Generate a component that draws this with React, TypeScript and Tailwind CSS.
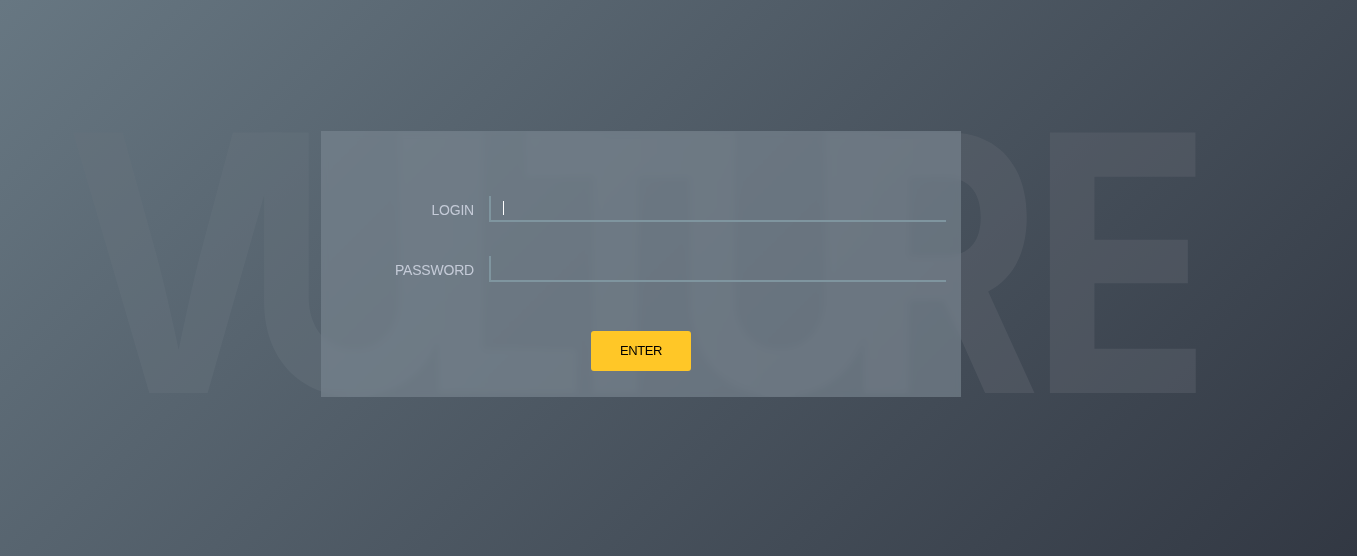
export default function App() {
  return (
    <div className="relative h-[556px] w-full overflow-hidden bg-[linear-gradient(135deg,#677782_0%,#323843_100%)] font-['Liberation_Sans',sans-serif]">
      <div className="pointer-events-none absolute left-[66px] top-[46px] origin-left scale-x-[0.835] whitespace-nowrap bg-[linear-gradient(90deg,#66727c_0%,#66727c_30%,#5e646e_75%)] bg-clip-text pr-[80px] font-['Inter',sans-serif] text-[358px] font-bold leading-[434px] text-transparent opacity-45">
        <span className="tracking-[-53.6px]">VULTUR</span>
        <span className="ml-[41px]">E</span>
      </div>
      <div className="relative pl-[321px] pt-[131px]">
        <form className="h-[266px] w-[640px] bg-[#7a8590]/65 pt-[65px] backdrop-blur-[3px]">
          <div className="flex h-[26px] items-end">
            <label className="w-[153px] pb-[2px] text-right text-sm leading-5 tracking-[-0.2px] text-[#c5cbd8]">LOGIN</label>
            <div className="relative ml-[15px] h-[26px] w-[457px] border-b-2 border-l-2 border-[#7f959f]">
              <span className="absolute left-[12px] top-[5px] h-[14px] w-px bg-white" />
            </div>
          </div>
          <div className="mt-[34px] flex h-[26px] items-end">
            <label className="w-[153px] pb-[2px] text-right text-sm leading-5 tracking-[-0.2px] text-[#c5cbd8]">PASSWORD</label>
            <div className="ml-[15px] h-[26px] w-[457px] border-b-2 border-l-2 border-[#7f959f]" />
          </div>
          <button type="button" className="ml-[270px] mt-[49px] h-10 w-[100px] rounded-[3px] bg-[#ffc727] text-[13px] tracking-[-0.4px] text-black">
            ENTER
          </button>
        </form>
      </div>
    </div>
  );
}
